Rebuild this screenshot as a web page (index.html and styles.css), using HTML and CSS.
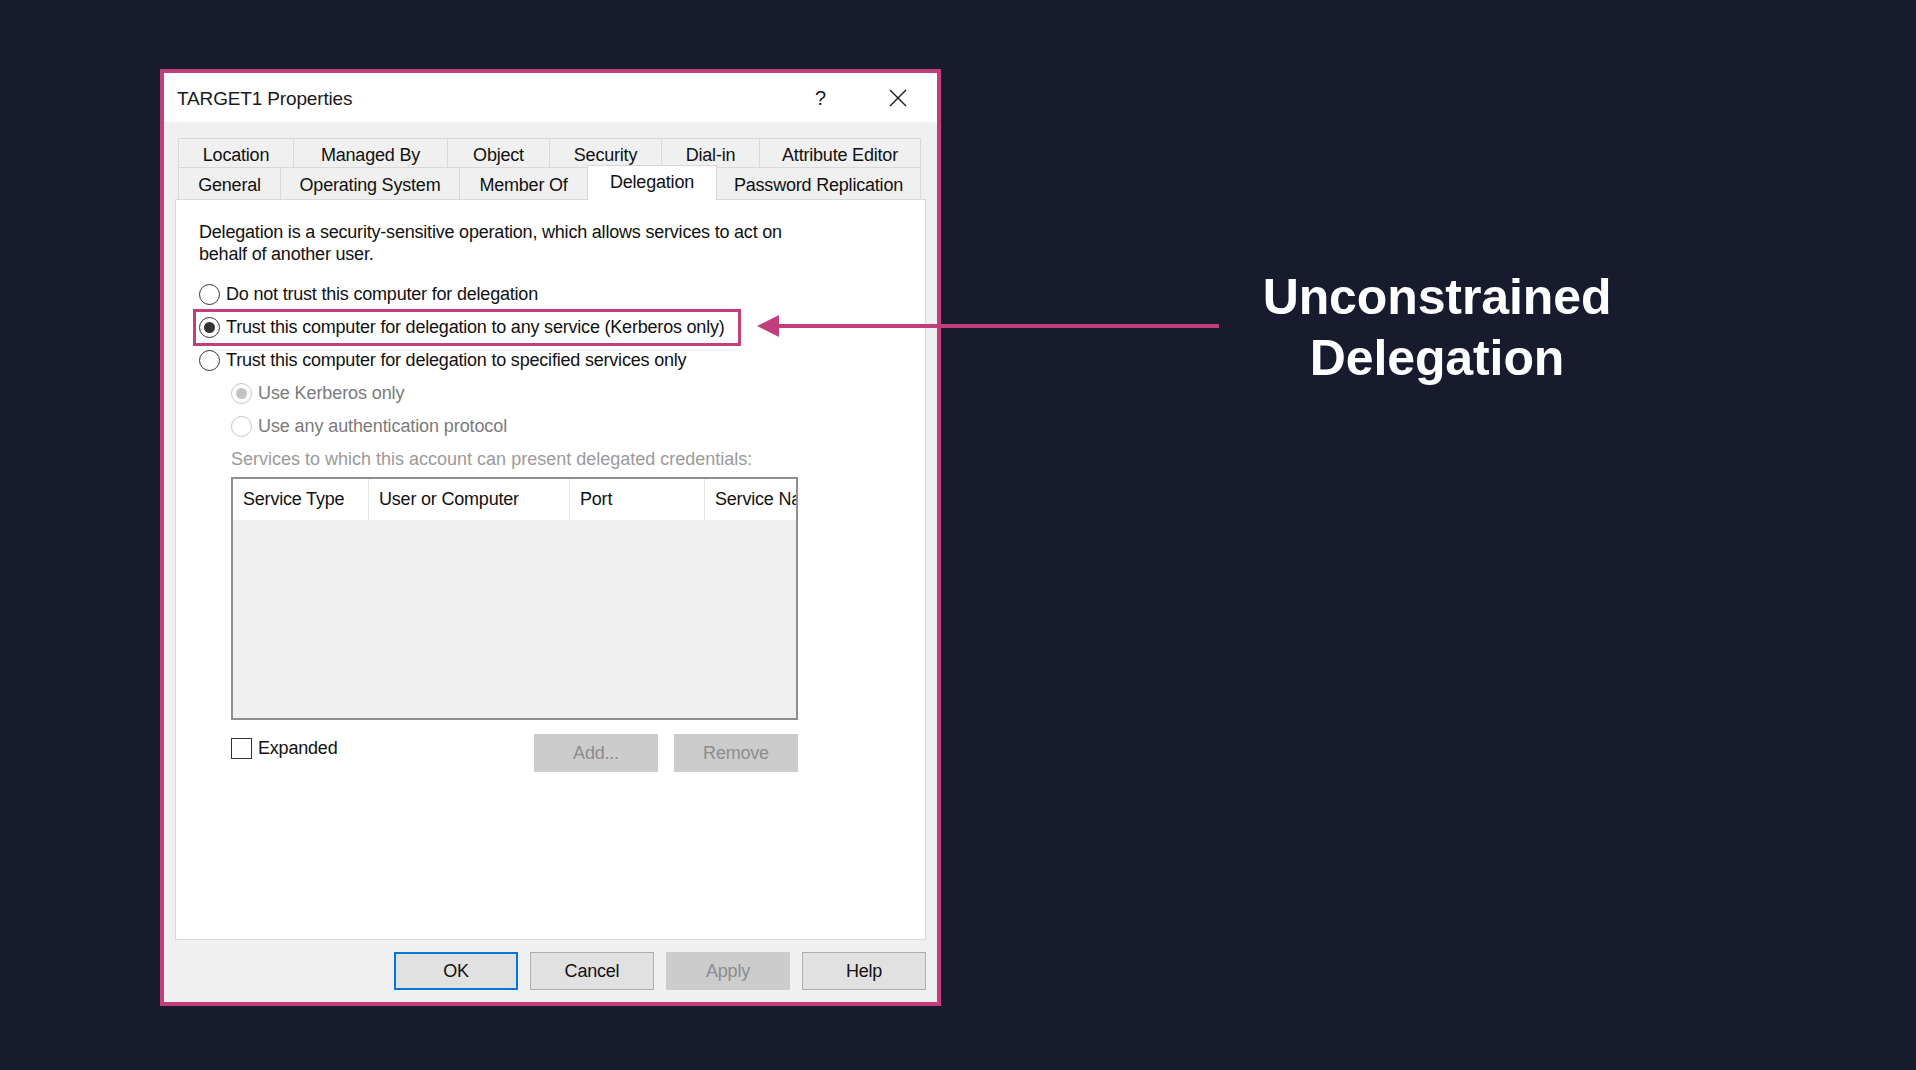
FILE: index.html
```html
<!DOCTYPE html>
<html>
<head>
<meta charset="utf-8">
<link rel="stylesheet" href="styles.css">
</head>
<body>
<div class="stage">
  <div class="dialog">
    <div class="titlebar">
      <span class="title">TARGET1 Properties</span>
      <span class="help">?</span>
      <svg class="close" width="18" height="18" viewBox="0 0 18 18"><path d="M1 1 L17 17 M17 1 L1 17" stroke="#1a1a1a" stroke-width="1.4" fill="none"/></svg>
    </div>
    <div class="dbody">
      <div class="tabs">
        <div class="tabrow row1">
          <div class="tab">Location</div>
          <div class="tab">Managed By</div>
          <div class="tab">Object</div>
          <div class="tab">Security</div>
          <div class="tab">Dial-in</div>
          <div class="tab">Attribute Editor</div>
        </div>
        <div class="tabrow row2">
          <div class="tab">General</div>
          <div class="tab">Operating System</div>
          <div class="tab">Member Of</div>
          <div class="tab selected">Delegation</div>
          <div class="tab">Password Replication</div>
        </div>
      </div>
      <div class="panel">
        <p class="desc">Delegation is a security-sensitive operation, which allows services to act on<br>behalf of another user.</p>
        <div class="opt"><span class="radio"></span><span>Do not trust this computer for delegation</span></div>
        <div class="opt hl"><span class="radio on"></span><span>Trust this computer for delegation to any service (Kerberos only)</span><span class="hlbox"></span></div>
        <div class="opt"><span class="radio"></span><span>Trust this computer for delegation to specified services only</span></div>
        <div class="opt sub dis"><span class="radio on"></span><span>Use Kerberos only</span></div>
        <div class="opt sub dis"><span class="radio"></span><span>Use any authentication protocol</span></div>
        <div class="opt sub label">Services to which this account can present delegated credentials:</div>
        <div class="list">
          <div class="lhead">
            <div class="col c1">Service Type</div>
            <div class="col c2">User or Computer</div>
            <div class="col c3">Port</div>
            <div class="col c4">Service Na</div>
          </div>
          <div class="lbody"></div>
        </div>
        <div class="under">
          <div class="chk"><span class="box"></span><span>Expanded</span></div>
          <div class="ubtns">
            <button class="btn dbtn">Add...</button>
            <button class="btn dbtn">Remove</button>
          </div>
        </div>
      </div>
      <div class="buttons">
        <button class="btn def">OK</button>
        <button class="btn">Cancel</button>
        <button class="btn dbtn">Apply</button>
        <button class="btn">Help</button>
      </div>
    </div>
  </div>
  <div class="caption">Unconstrained<br>Delegation</div>
  <svg class="arrow" width="462" height="26" viewBox="0 0 462 26"><path d="M0 13 L22 2 L22 24 Z" fill="#c23f7c"/><rect x="20" y="11" width="442" height="4" fill="#c23f7c"/></svg>
</div>
</body>
</html>
```
FILE: styles.css
```css
html, body {
  margin: 0;
  padding: 0;
  background: #181a2e;
}
.stage {
  position: relative;
  width: 1916px;
  height: 1070px;
  display: flex;
  align-items: flex-start;
  padding: 69px 0 0 160px;
  box-sizing: border-box;
  font-family: "Liberation Sans", Arial, sans-serif;
}
.dialog {
  width: 781px;
  height: 937px;
  box-sizing: border-box;
  border: 4px solid #c23f7c;
  background: #f0f0f0;
  display: flex;
  flex-direction: column;
}
.titlebar {
  height: 49px;
  background: #ffffff;
  display: flex;
  align-items: center;
  padding-left: 13px;
  padding-top: 2px;
  box-sizing: border-box;
  flex: none;
}
.title {
  font-size: 19px;
  color: #1a1a1a;
  letter-spacing: -0.15px;
  flex: 1;
}
.help {
  font-size: 20px;
  color: #1a1a1a;
  margin-right: 63px;
}
.close {
  margin-right: 30px;
  margin-top: -2px;
}
.dbody {
  flex: 1;
  display: flex;
  flex-direction: column;
  padding: 16px 11px 11px 11px;
}
.tabs {
  padding-left: 3px;
  width: 743px;
}
.tabrow {
  display: grid;
  height: 30px;
}
.row1 {
  grid-template-columns: 115px 154px 102px 112px 98px 162px;
}
.row2 {
  grid-template-columns: 102px 179px 128px 130px 204px;
  height: 31px;
  position: relative;
  z-index: 1;
}
.tab {
  border: 1px solid #d9d9d9;
  border-right: none;
  background: #f0f0f0;
  font-size: 18px;
  color: #111;
  letter-spacing: -0.2px;
  display: flex;
  align-items: center;
  justify-content: center;
  padding-top: 4px;
  box-sizing: border-box;
}
.tab:last-child {
  border-right: 1px solid #d9d9d9;
}
.row2 .tab {
  border-top: none;
  border-bottom: none;
}
.row2 .tab.selected {
  background: #ffffff;
  margin-top: -3px;
  margin-bottom: -1px;
  border-top: 1px solid #d9d9d9;
  border-right: 1px solid #d9d9d9;
  align-items: flex-start;
  padding-top: 6px;
}
.row2 .tab.selected + .tab {
  border-left: none;
}
.panel {
  height: 741px;
  box-sizing: border-box;
  background: #ffffff;
  border: 1px solid #d9d9d9;
  padding: 21px 0 0 23px;
  flex: none;
}
.desc {
  margin: 0 0 13px 0;
  font-size: 18px;
  line-height: 22px;
  color: #111;
  letter-spacing: -0.2px;
}
.opt {
  height: 33px;
  display: flex;
  align-items: center;
  font-size: 18px;
  color: #111;
  letter-spacing: -0.2px;
  position: relative;
  white-space: nowrap;
}
.radio {
  width: 21px;
  height: 21px;
  box-sizing: border-box;
  border: 1.5px solid #333;
  border-radius: 50%;
  margin-right: 6px;
  display: flex;
  align-items: center;
  justify-content: center;
  flex: none;
  background: #fff;
}
.radio.on::after {
  content: "";
  width: 11px;
  height: 11px;
  border-radius: 50%;
  background: #333;
}
.hlbox {
  position: absolute;
  left: -6px;
  top: -2px;
  width: 548px;
  height: 37px;
  box-sizing: border-box;
  border: 3px solid #c23f7c;
}
.sub {
  padding-left: 32px;
}
.dis {
  color: #7a7a7a;
  letter-spacing: -0.1px;
}
.dis .radio {
  border-color: #c4c4c4;
}
.dis .radio.on::after {
  background: #c4c4c4;
}
.label {
  color: #9a9a9a;
  font-size: 18px;
  letter-spacing: 0;
}
.list {
  margin: 1px 0 0 32px;
  width: 567px;
  height: 243px;
  box-sizing: border-box;
  border: 2px solid #8e8e8e;
  background: #f0f0f0;
  display: flex;
  flex-direction: column;
  overflow: hidden;
}
.lhead {
  display: flex;
  height: 41px;
  background: #ffffff;
  flex: none;
}
.col {
  flex: none;
  box-sizing: border-box;
  padding-left: 10px;
  display: flex;
  align-items: center;
  font-size: 18px;
  letter-spacing: -0.2px;
  color: #111;
  border-right: 1px solid #e5e5e5;
  white-space: nowrap;
  overflow: hidden;
}
.c1 { width: 136px; }
.c2 { width: 201px; }
.c3 { width: 135px; }
.c4 { width: 95px; border-right: none; }
.lbody {
  flex: 1;
}
.under {
  margin: 14px 0 0 32px;
  width: 567px;
  display: flex;
  justify-content: space-between;
  align-items: flex-start;
}
.chk {
  display: flex;
  align-items: center;
  font-size: 18px;
  letter-spacing: -0.2px;
  color: #111;
  height: 28px;
}
.box {
  width: 21px;
  height: 21px;
  box-sizing: border-box;
  border: 1.5px solid #333;
  margin-right: 6px;
  background: #fff;
}
.ubtns {
  display: flex;
  gap: 16px;
}
.btn {
  width: 124px;
  height: 38px;
  box-sizing: border-box;
  background: #e1e1e1;
  border: 1px solid #adadad;
  font-family: "Liberation Sans", Arial, sans-serif;
  font-size: 18px;
  letter-spacing: -0.2px;
  color: #111;
  padding: 0;
}
.btn.dbtn {
  background: #cccccc;
  border-color: #cccccc;
  color: #8c8c8c;
}
.btn.def {
  border: 2px solid #0078d7;
}
.buttons {
  display: flex;
  justify-content: flex-end;
  gap: 12px;
  margin-top: 12px;
}
.caption {
  margin: 198px 0 0 286px;
  width: 420px;
  text-align: center;
  color: #ffffff;
  font-weight: bold;
  font-size: 50px;
  line-height: 61px;
  letter-spacing: -0.1px;
}
.arrow {
  position: absolute;
  left: 757px;
  top: 313px;
}
```
